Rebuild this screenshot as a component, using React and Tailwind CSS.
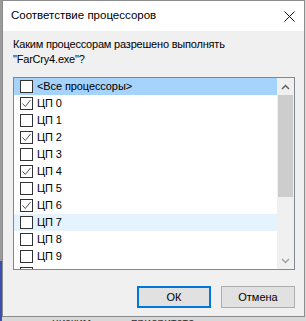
const cpus = [
  { label: "<Все процессоры>", checked: false, selected: true },
  { label: "ЦП 0", checked: true },
  { label: "ЦП 1", checked: false },
  { label: "ЦП 2", checked: true },
  { label: "ЦП 3", checked: false },
  { label: "ЦП 4", checked: true },
  { label: "ЦП 5", checked: false },
  { label: "ЦП 6", checked: true },
  { label: "ЦП 7", checked: false, hover: true },
  { label: "ЦП 8", checked: false },
  { label: "ЦП 9", checked: false },
  { label: "ЦП 10", checked: false },
];

const CheckBox = ({ checked }) => (
  <span className="w-[13px] h-[13px] border border-[#333] bg-white flex items-center justify-center shrink-0">
    {checked && (
      <svg width="11" height="11" viewBox="0 0 11 11" fill="none">
        <path d="M1.5 5.5l2.8 3 5.2-6.5" stroke="#555" strokeWidth="1" />
      </svg>
    )}
  </span>
);

const Row = ({ label, checked, selected, hover }) => (
  <div
    className={`h-[17px] flex items-center gap-[4px] pl-[6px] shrink-0 ${
      selected ? "bg-[#a6d3fc]" : hover ? "bg-[#e5f3ff]" : ""
    }`}>
    <CheckBox checked={checked} />
    <span className="text-[11px] tracking-[-0.1px] leading-none text-black">{label}</span>
  </div>
);

export default function App() {
  return (
    <div
      className="w-[306px] h-[321px] overflow-hidden flex bg-[#d8d8d8]"
      style={{ fontFamily: '"Liberation Sans", Arial, sans-serif' }}>
      <div className="w-[2px] flex flex-col shrink-0">
        <div className="flex-1 bg-[#9a9a9a]"></div>
        <div className="h-[60px] bg-[#3a4fb0]"></div>
      </div>
      <div className="w-[303px] flex flex-col shrink-0">
        <div className="h-[317px] flex flex-col border border-[#8c8c8c] bg-[#f0f0f0]">
          <div className="h-[30px] bg-white flex items-center justify-between pl-[8px] pr-[9px]">
            <span className="text-[11.5px] text-black">Соответствие процессоров</span>
            <svg width="11" height="11" viewBox="0 0 11 11">
              <path d="M0.5 0.5l10 10M10.5 0.5l-10 10" stroke="#111" strokeWidth="1" />
            </svg>
          </div>
          <div className="flex flex-col pl-[10px] pt-[6px]">
            <p className="text-[11px] tracking-[-0.2px] leading-[15px] text-black">
              Каким процессорам разрешено выполнять
              <br />
              "FarCry4.exe"?
            </p>
          </div>
          <div className="ml-[10px] mt-[10px] w-[282px] h-[193px] border border-[#828790] bg-white flex">
            <div className="flex-1 flex flex-col overflow-hidden">
              {cpus.map((c) => (
                <Row key={c.label} {...c} />
              ))}
            </div>
            <div className="w-[17px] bg-[#f0f0f0] flex flex-col">
              <div className="h-[17px] flex items-center justify-center">
                <svg width="9" height="6" viewBox="0 0 9 6">
                  <path d="M1 5l3.5-3.5L8 5" stroke="#606060" strokeWidth="1.5" fill="none" />
                </svg>
              </div>
              <div className="h-[102px] mx-[1px] bg-[#cdcdcd]"></div>
              <div className="flex-1"></div>
              <div className="h-[17px] flex items-center justify-center">
                <svg width="9" height="6" viewBox="0 0 9 6">
                  <path d="M1 1l3.5 3.5L8 1" stroke="#a0a0a0" strokeWidth="1.5" fill="none" />
                </svg>
              </div>
            </div>
          </div>
          <div className="flex justify-end gap-[10px] pr-[9px] mt-[16px]">
            <button className="w-[74px] h-[22px] border-2 border-[#0078d7] bg-[#e1e1e1] text-[11px] text-black">
              ОК
            </button>
            <button className="w-[74px] h-[22px] border border-[#adadad] bg-[#e1e1e1] text-[11px] text-black">
              Отмена
            </button>
          </div>
        </div>
        <div className="h-[4px] overflow-hidden flex gap-[40px] pl-[50px] text-[12px] leading-[12px] text-[#333]">
          <span>низким</span>
          <span>приоритета</span>
        </div>
      </div>
    </div>
  );
}
